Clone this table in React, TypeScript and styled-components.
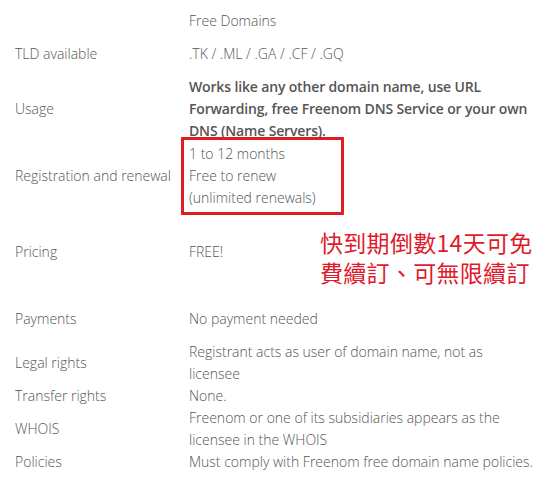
import React from 'react';
import styled, { createGlobalStyle } from 'styled-components';

const GlobalStyle = createGlobalStyle`
  html, body {
    margin: 0;
    padding: 0;
    background: #fff;
  }
  body {
    font-family: 'Open Sans', 'Liberation Sans', sans-serif;
    font-weight: 300;
    font-size: 14px;
    line-height: 22px;
    color: #555;
  }
`;

const Table = styled.div`
  position: relative;
  width: 537px;
  padding-left: 15px;
  box-sizing: border-box;
`;

const Row = styled.div<{ $space: number }>`
  display: grid;
  grid-template-columns: 174px 1fr;
  align-items: center;
  margin-top: ${p => p.$space}px;
`;

const Label = styled.div`
  white-space: nowrap;
`;

const Value = styled.div<{ $strong?: boolean }>`
  position: relative;
  font-weight: ${p => (p.$strong ? 600 : 300)};
  letter-spacing: ${p => (p.$strong ? '-0.15px' : '0')};
`;

const Line = styled.div<{ $nowrap?: boolean }>`
  white-space: ${p => (p.$nowrap ? 'nowrap' : 'normal')};
`;

const Highlight = styled.div`
  position: absolute;
  left: -8px;
  top: -6px;
  width: 163px;
  height: 78px;
  border: 3px solid #e31b23;
  border-radius: 1px;
  box-sizing: border-box;
  pointer-events: none;
`;

const Note = styled.div`
  position: absolute;
  left: 320px;
  top: 217px;
  font-family: 'Noto Sans CJK TC', 'Noto Sans CJK SC', sans-serif;
  font-weight: 400;
  font-size: 23px;
  line-height: 30px;
  letter-spacing: 0.3px;
  color: #e0192b;
  white-space: nowrap;
`;

const rows: { label: string; lines: string[]; space: number; strong?: boolean }[] = [
  { label: '', lines: ['Free Domains'], space: 10 },
  { label: 'TLD available', lines: ['.TK / .ML / .GA / .CF / .GQ'], space: 11 },
  {
    label: 'Usage',
    lines: ['Works like any other domain name, use URL', 'Forwarding, free Freenom DNS Service or your own', 'DNS (Name Servers).'],
    space: 11,
    strong: true,
  },
  { label: 'Registration and renewal', lines: ['1 to 12 months', 'Free to renew', '(unlimited renewals)'], space: 1 },
  { label: 'Pricing', lines: ['FREE!'], space: 32 },
  { label: 'Payments', lines: ['No payment needed'], space: 45 },
  { label: 'Legal rights', lines: ['Registrant acts as user of domain name, not as licensee'], space: 11 },
  { label: 'Transfer rights', lines: ['None.'], space: 0 },
  { label: 'WHOIS', lines: ['Freenom or one of its subsidiaries appears as the licensee in the WHOIS'], space: 0 },
  { label: 'Policies', lines: ['Must comply with Freenom free domain name policies.'], space: 0 },
];

export default function App() {
  return (
    <>
      <GlobalStyle />
      <Table>
        {rows.map((r, i) => (
          <Row key={i} $space={r.space}>
            <Label>{r.label}</Label>
            <Value $strong={r.strong}>
              {r.lines.map((l, j) => (
                <Line key={j} $nowrap={r.strong}>{l}</Line>
              ))}
              {r.label === 'Registration and renewal' && <Highlight />}
            </Value>
          </Row>
        ))}
        <Note>
          快到期倒數14天可免
          <br />
          費續訂、可無限續訂
        </Note>
      </Table>
    </>
  );
}
